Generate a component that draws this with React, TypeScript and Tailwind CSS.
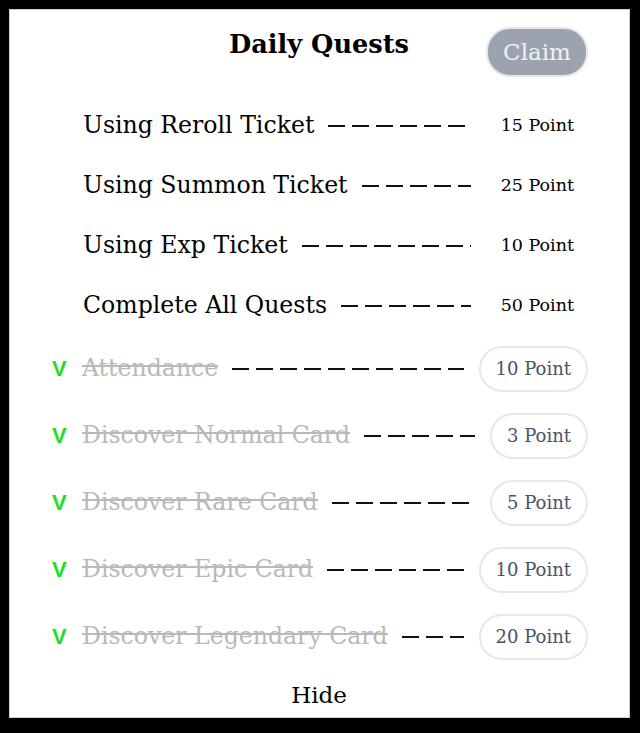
import React from "react";

type Quest = {
  name: string;
  points: number;
  done: boolean;
};

const quests: Array<Quest> = [
  { name: "Using Reroll Ticket", points: 15, done: false },
  { name: "Using Summon Ticket", points: 25, done: false },
  { name: "Using Exp Ticket", points: 10, done: false },
  { name: "Complete All Quests", points: 50, done: false },
  { name: "Attendance", points: 10, done: true },
  { name: "Discover Normal Card", points: 3, done: true },
  { name: "Discover Rare Card", points: 5, done: true },
  { name: "Discover Epic Card", points: 10, done: true },
  { name: "Discover Legendary Card", points: 20, done: true },
];

function Dashes({ className }: { className: string }) {
  return (
    <div
      className={
        "h-[2px] flex-1 bg-[linear-gradient(to_right,#111_17px,transparent_17px)] bg-[length:24px_2px] bg-repeat-x " +
        className
      }
    />
  );
}

function QuestRow({ quest }: { quest: Quest }) {
  if (!quest.done) {
    return (
      <div className="flex h-[60px] items-center pt-[2px]">
        <div className="w-[33px] shrink-0" />
        <span className="text-[23.6px] leading-none text-black">{quest.name}</span>
        <Dashes className="ml-[14px] mr-[30px]" />
        <span className="pr-[14px] text-[17.5px] leading-none text-black">
          {quest.points} Point
        </span>
      </div>
    );
  }

  return (
    <div className="flex h-[46px] items-center">
      <div className="w-[32px] shrink-0 pl-[2px] font-['Liberation_Sans',sans-serif] text-[22px] font-semibold leading-none text-[#1ede1e]">
        V
      </div>
      {/* strike line sits a bit high in the design, so it's drawn as a background */}
      <span className="bg-[linear-gradient(#b9b9b9,#b9b9b9)] bg-[length:100%_2px] bg-[position:0_38%] bg-no-repeat text-[23.6px] leading-none text-[#b9b9b9]">
        {quest.name}
      </span>
      <Dashes className="ml-[14px] mr-[15px]" />
      <div className="flex h-[46px] items-center rounded-full border-2 border-[#e5e7eb] px-[15px] text-[18px] leading-none text-[#4b5266]">
        {quest.points} Point
      </div>
    </div>
  );
}

function App() {
  const pending = quests.filter((q) => !q.done);
  const completed = quests.filter((q) => q.done);

  return (
    <div className="h-[733px] w-[640px] bg-black pb-[15px] pl-[9px] pr-[10px] pt-[9px] font-['DejaVu_Serif',serif]">
      <div className="flex h-full flex-col bg-white pl-[41px] pr-[42px] pt-[18px] shadow-[inset_0_0_0_1px_#cfcfcf]">
        <div className="grid h-[50px] grid-cols-[1fr_auto_1fr] items-start">
          <div />
          <h1 className="text-[25.6px] font-bold leading-[34px] text-black">
            Daily Quests
          </h1>
          <div className="flex justify-end">
            <button className="h-[50px] w-[102px] rounded-[24px] border-2 border-[#e5e7eb] bg-[#9ca3af] text-[23px] text-[#eef0f3]">
              Claim
            </button>
          </div>
        </div>

        <div className="mt-[18px] flex flex-col">
          {pending.map((q) => (
            <QuestRow key={q.name} quest={q} />
          ))}
        </div>

        <div className="mt-[11px] flex flex-col gap-[21px]">
          {completed.map((q) => (
            <QuestRow key={q.name} quest={q} />
          ))}
        </div>

        <div className="mt-[20px] text-center text-[23px] leading-[30px] text-black">
          Hide
        </div>
      </div>
    </div>
  );
}

export default App;
